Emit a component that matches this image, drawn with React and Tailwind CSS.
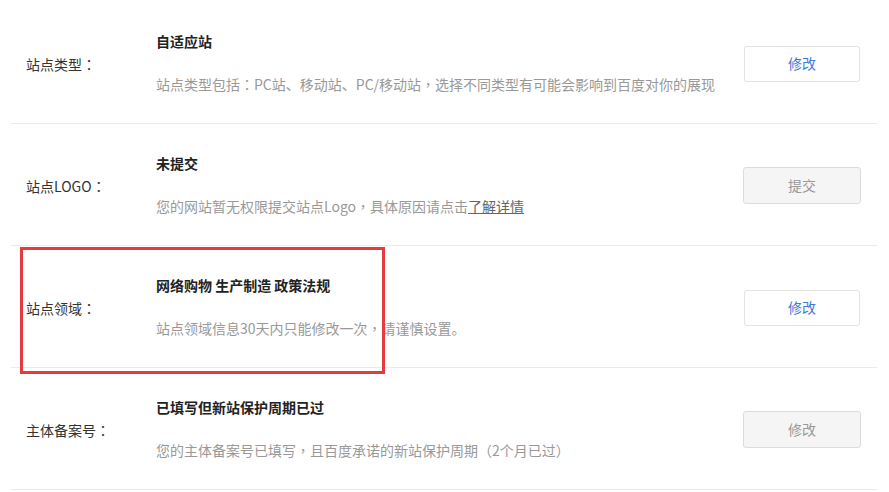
import React from "react";

const P = ({ children }) => (
  <span style={{ fontFamily: '"Noto Sans CJK TC", "Noto Sans CJK SC", sans-serif' }}>
    {children}
  </span>
);

const rows = [
  {
    label: <>站点类型<P>：</P></>,
    title: "自适应站",
    desc: <>站点类型包括<P>：</P>PC站、移动站、PC/移动站<P>，</P>选择不同类型有可能会影响到百度对你的展现</>,
    btn: "修改",
    disabled: false,
  },
  {
    label: <>站点LOGO<P>：</P></>,
    title: "未提交",
    desc: (
      <>
        您的网站暂无权限提交站点Logo<P>，</P>具体原因请点击
        <span className="text-[#666] underline">了解详情</span>
      </>
    ),
    btn: "提交",
    disabled: true,
  },
  {
    label: <>站点领域<P>：</P></>,
    title: "网络购物 生产制造 政策法规",
    desc: <>站点领域信息30天内只能修改一次<P>，</P>请谨慎设置。</>,
    btn: "修改",
    disabled: false,
  },
  {
    label: <>主体备案号<P>：</P></>,
    title: "已填写但新站保护周期已过",
    desc: <>您的主体备案号已填写<P>，</P>且百度承诺的新站保护周期<P>（</P>2个月已过<P>）</P></>,
    btn: "修改",
    disabled: true,
  },
];

export default function App() {
  return (
    <div
      className="relative w-[889px] h-[492px] bg-white overflow-hidden pt-[2px]"
      style={{ fontFamily: '"Noto Sans CJK SC", "Noto Sans", sans-serif' }}
    >
      <div className="mx-[11px] w-[866px]">
        {rows.map((r, i) => (
          <div
            key={i}
            className="flex items-center h-[122px] border-b border-[#ebebeb] pt-[2px]"
          >
            <div className="w-[145px] pl-[15px] text-[14px] leading-[20px] text-[#333]">
              {r.label}
            </div>
            <div className="flex-1 flex flex-col mb-[2px]">
              <div className="text-[14px] leading-[20px] font-bold text-[#222]">
                {r.title}
              </div>
              <div className="mt-[23px] text-[14px] leading-[20px] text-[#999]">
                {r.desc}
              </div>
            </div>
            {r.disabled ? (
              <div className="mr-[16px] w-[118px] h-[37px] flex items-center justify-center rounded-[3px] border border-[#dcdcdc] bg-[#f5f5f5] text-[14px] text-[#999]">
                {r.btn}
              </div>
            ) : (
              <div className="mr-[17px] w-[116px] h-[36px] flex items-center justify-center rounded-[3px] border border-[#e3e3e3] bg-white text-[14px] text-[#3d7ad9]">
                {r.btn}
              </div>
            )}
          </div>
        ))}
      </div>
      <div className="absolute left-[20px] top-[247px] w-[365px] h-[127px] border-[3px] border-[#e53a3f] pointer-events-none" />
    </div>
  );
}
